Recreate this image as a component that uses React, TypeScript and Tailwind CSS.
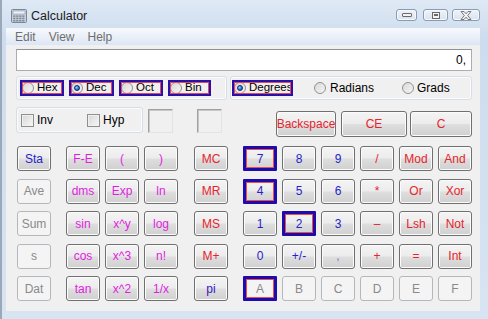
import type { ReactNode } from 'react'

type Kind = 'blue' | 'mag' | 'red' | 'off' | 'pi' | 'gray'

interface KeyDef {
  label: string
  kind: Kind
  hot?: boolean
}

const textColor: Record<Kind, string> = {
  blue: 'text-[#2424cc]',
  mag: 'text-[#e01ee0]',
  red: 'text-[#e6242c]',
  off: 'text-[#8a8a8a]',
  pi: 'text-[#3418c4]',
  gray: 'text-[#7c7cb8]',
}

// 5 rows, left block / scientific block / memory / number block
const staCol: KeyDef[] = [
  { label: 'Sta', kind: 'blue' },
  { label: 'Ave', kind: 'off' },
  { label: 'Sum', kind: 'off' },
  { label: 's', kind: 'off' },
  { label: 'Dat', kind: 'off' },
]

const sciKeys: KeyDef[] = [
  { label: 'F-E', kind: 'mag' }, { label: '(', kind: 'mag' }, { label: ')', kind: 'mag' },
  { label: 'dms', kind: 'mag' }, { label: 'Exp', kind: 'mag' }, { label: 'ln', kind: 'mag' },
  { label: 'sin', kind: 'mag' }, { label: 'x^y', kind: 'mag' }, { label: 'log', kind: 'mag' },
  { label: 'cos', kind: 'mag' }, { label: 'x^3', kind: 'mag' }, { label: 'n!', kind: 'mag' },
  { label: 'tan', kind: 'mag' }, { label: 'x^2', kind: 'mag' }, { label: '1/x', kind: 'mag' },
]

const memCol: KeyDef[] = [
  { label: 'MC', kind: 'red' },
  { label: 'MR', kind: 'red' },
  { label: 'MS', kind: 'red' },
  { label: 'M+', kind: 'red' },
  { label: 'pi', kind: 'pi' },
]

const numKeys: KeyDef[] = [
  { label: '7', kind: 'blue', hot: true }, { label: '8', kind: 'blue' }, { label: '9', kind: 'blue' },
  { label: '/', kind: 'red' }, { label: 'Mod', kind: 'red' }, { label: 'And', kind: 'red' },
  { label: '4', kind: 'blue', hot: true }, { label: '5', kind: 'blue' }, { label: '6', kind: 'blue' },
  { label: '*', kind: 'red' }, { label: 'Or', kind: 'red' }, { label: 'Xor', kind: 'red' },
  { label: '1', kind: 'blue' }, { label: '2', kind: 'blue', hot: true }, { label: '3', kind: 'blue' },
  { label: '–', kind: 'red' }, { label: 'Lsh', kind: 'red' }, { label: 'Not', kind: 'red' },
  { label: '0', kind: 'blue' }, { label: '+/-', kind: 'blue' }, { label: ',', kind: 'gray' },
  { label: '+', kind: 'red' }, { label: '=', kind: 'red' }, { label: 'Int', kind: 'red' },
  { label: 'A', kind: 'off', hot: true }, { label: 'B', kind: 'off' }, { label: 'C', kind: 'off' },
  { label: 'D', kind: 'off' }, { label: 'E', kind: 'off' }, { label: 'F', kind: 'off' },
]

function HotFrame() {
  // blue focus frame with thin red line inside
  return (
    <span className="pointer-events-none absolute -inset-[1px] rounded-[1px] border-[3px] border-[#1f0ca8]">
      <span className="absolute inset-0 border border-[#e2505a]" />
    </span>
  )
}

function Key({ k, className = 'w-[34px] h-[25px]' }: { k: KeyDef; className?: string }) {
  const off = k.kind === 'off'
  return (
    <div
      className={`relative flex items-center justify-center rounded-[3px] border text-[12px] leading-none ${className} ${
        off
          ? 'border-[#b4b8bb] bg-[#f4f4f4]'
          : 'border-[#707070] bg-[linear-gradient(#f4f4f4,#ececec_48%,#dedede_52%,#d0d0d0)] shadow-[inset_0_0_0_1px_#fbfbfb]'
      } ${textColor[k.kind]}`}
    >
      {k.label}
      {k.hot && <HotFrame />}
    </div>
  )
}

function Radio({ checked }: { checked?: boolean }) {
  return (
    <span className="flex h-[12px] w-[12px] shrink-0 items-center justify-center rounded-full border border-[#929292] bg-[linear-gradient(135deg,#d8d8d8,#f6f6f6)]">
      {checked && (
        <span className="h-[6px] w-[6px] rounded-full border border-[#0a2a6a] bg-[radial-gradient(circle_at_35%_35%,#9fd0ff,#1a5fc0_70%)]" />
      )}
    </span>
  )
}

function RadioBox({ label, checked, w }: { label: string; checked?: boolean; w: string }) {
  return (
    <div className={`relative flex h-[14px] items-center gap-[3px] pl-[2px] ${w}`}>
      <Radio checked={checked} />
      <span className="text-[11.5px] leading-none text-black">{label}</span>
      <span className="pointer-events-none absolute -inset-y-[1px] inset-x-0 border-2 border-[#2a10a8]">
        <span className="absolute inset-0 border border-[#e04a5c]" />
      </span>
    </div>
  )
}

function Check({ label }: { label: string }) {
  return (
    <div className="flex items-center gap-[3px]">
      <span className="h-[13px] w-[13px] border border-[#8e8f8f] bg-[linear-gradient(135deg,#d6d6d6,#f8f8f8)] shadow-[inset_0_0_0_1px_#f0f0f0]" />
      <span className="text-[12px] leading-none text-black">{label}</span>
    </div>
  )
}

function Group({ children, className }: { children: ReactNode; className: string }) {
  return (
    <div className={`flex items-center rounded-[3px] border border-[#d5dfe5] shadow-[inset_0_0_0_1px_#fbfbfb] ${className}`}>
      {children}
    </div>
  )
}

function CalcIcon() {
  return (
    <svg width="16" height="14" viewBox="0 0 16 14">
      <rect x="0.5" y="0.5" width="15" height="13" rx="1" fill="#c7d0dc" stroke="#7c8796" />
      <rect x="2" y="2" width="12" height="3" fill="#eef3f8" stroke="#8c97a6" strokeWidth="0.6" />
      {[0, 1, 2].map((r) =>
        [0, 1, 2, 3].map((c) => (
          <rect key={`${r}-${c}`} x={2.2 + c * 3} y={6.4 + r * 2.3} width="2.2" height="1.5" fill="#7f8a99" />
        )),
      )}
    </svg>
  )
}

function CaptionBtn({ w, children }: { w: string; children: ReactNode }) {
  return (
    <div
      className={`flex h-[12px] items-center justify-center rounded-[3px] border border-[#8a9bb3] bg-[linear-gradient(#eef3f9,#d9e3ef)] shadow-[inset_0_0_0_1px_#f6f9fc] ${w}`}
    >
      {children}
    </div>
  )
}

export default function App() {
  return (
    <div className="flex h-[319px] w-[488px] flex-col overflow-hidden border-l-2 border-[#9aa8b8] bg-[linear-gradient(#dfe9f5,#cddcee_12%,#d8e4f2)] font-['Liberation_Sans',Arial,sans-serif]">
      {/* title bar */}
      <div className="flex h-[28px] shrink-0 items-start">
        <div className="ml-[9px] mt-[9px]">
          <CalcIcon />
        </div>
        <span className="ml-[4px] mt-[9px] text-[12.5px] leading-[14px] text-[#202020]">Calculator</span>
        <div className="ml-auto mr-[8px] mt-[9px] flex items-start">
          <CaptionBtn w="w-[21px]">
            <span className="h-[4px] w-[10px] rounded-[1px] border border-[#6a6a6a] bg-[#f4f4f4]" />
          </CaptionBtn>
          <div className="ml-[6px]">
            <CaptionBtn w="w-[25px]">
              <span className="flex h-[7px] w-[8px] items-center justify-center border border-[#6a6a6a] bg-[#f4f4f4]">
                <span className="h-[2px] w-[4px] border border-[#6a6a6a]" />
              </span>
            </CaptionBtn>
          </div>
          <div className="ml-[4px]">
            <CaptionBtn w="w-[28px]">
              <svg width="12" height="9" viewBox="0 0 12 9">
                <path
                  d="M1 0.5 L4 0.5 L6 2.8 L8 0.5 L11 0.5 L7.7 4.5 L11 8.5 L8 8.5 L6 6.2 L4 8.5 L1 8.5 L4.3 4.5 Z"
                  fill="#f2f2f2"
                  stroke="#6e6e6e"
                  strokeWidth="0.9"
                />
              </svg>
            </CaptionBtn>
          </div>
        </div>
      </div>

      {/* client area */}
      <div className="ml-[4px] flex h-[283px] w-[474px] flex-col bg-[#f0f0f0]">
        {/* menu */}
        <div className="flex h-[17px] shrink-0 items-center gap-[13px] bg-[linear-gradient(#f7f9fd,#e9eff8_55%,#dce6f4)] pl-[9px] text-[12px] leading-none text-[#6e6e6e]">
          <span>Edit</span>
          <span>View</span>
          <span>Help</span>
        </div>

        {/* display */}
        <div className="ml-[10px] mt-[4px] flex h-[22px] w-[456px] items-center justify-end border border-[#abadb3] border-t-[#8e9094] bg-white pr-[5px] text-[12px] leading-none text-black">
          0,
        </div>

        {/* base / angle groups */}
        <div className="ml-[10px] mt-[5px] flex gap-[3px]">
          <Group className="h-[24px] w-[211px] gap-[5px] pl-[3px]">
            <RadioBox label="Hex" w="w-[44px]" />
            <RadioBox label="Dec" w="w-[45px]" checked />
            <RadioBox label="Oct" w="w-[44px]" />
            <RadioBox label="Bin" w="w-[43px]" />
          </Group>
          <Group className="h-[24px] w-[242px] pl-[1px]">
            <RadioBox label="Degrees" w="w-[61px]" checked />
            <div className="ml-[21px] flex items-center gap-[4px]">
              <Radio />
              <span className="text-[12px] leading-none text-black">Radians</span>
            </div>
            <div className="ml-[28px] flex items-center gap-[3px]">
              <Radio />
              <span className="text-[12px] leading-none text-black">Grads</span>
            </div>
          </Group>
        </div>

        {/* inv/hyp, indicators, backspace row */}
        <div className="ml-[10px] mt-[7px] flex items-start">
          <Group className="h-[26px] w-[127px] pl-[4px]">
            <Check label="Inv" />
            <div className="ml-[34px]">
              <Check label="Hyp" />
            </div>
          </Group>
          <div className="ml-[5px] mt-[2px] h-[24px] w-[25px] border border-[#a0a0a0] border-b-[#e3e3e3] border-r-[#e3e3e3] shadow-[inset_1px_1px_0_#c8c8c8]" />
          <div className="ml-[24px] mt-[2px] h-[24px] w-[25px] border border-[#a0a0a0] border-b-[#e3e3e3] border-r-[#e3e3e3] shadow-[inset_1px_1px_0_#c8c8c8]" />
          <div className="ml-[54px] mt-[4px] flex gap-[5px]">
            <Key k={{ label: 'Backspace', kind: 'red' }} className="h-[26px] w-[60px]" />
            <Key k={{ label: 'CE', kind: 'red' }} className="h-[26px] w-[66px]" />
          </div>
          <div className="ml-[3px] mt-[4px]">
            <Key k={{ label: 'C', kind: 'red' }} className="h-[26px] w-[62px]" />
          </div>
        </div>

        {/* key grid */}
        <div className="ml-[11px] mt-[9px] flex">
          <div className="grid grid-cols-1 gap-y-[7.5px]">
            {staCol.map((k) => (
              <Key key={k.label} k={k} />
            ))}
          </div>
          <div className="ml-[15px] grid grid-cols-3 gap-x-[5px] gap-y-[7.5px]">
            {sciKeys.map((k) => (
              <Key key={k.label} k={k} />
            ))}
          </div>
          <div className="ml-[16px] grid grid-cols-1 gap-y-[7.5px]">
            {memCol.map((k) => (
              <Key key={k.label} k={k} />
            ))}
          </div>
          <div className="ml-[15px] grid grid-cols-6 gap-x-[5px] gap-y-[7.5px]">
            {numKeys.map((k) => (
              <Key key={k.label} k={k} />
            ))}
          </div>
        </div>
      </div>
    </div>
  )
}
